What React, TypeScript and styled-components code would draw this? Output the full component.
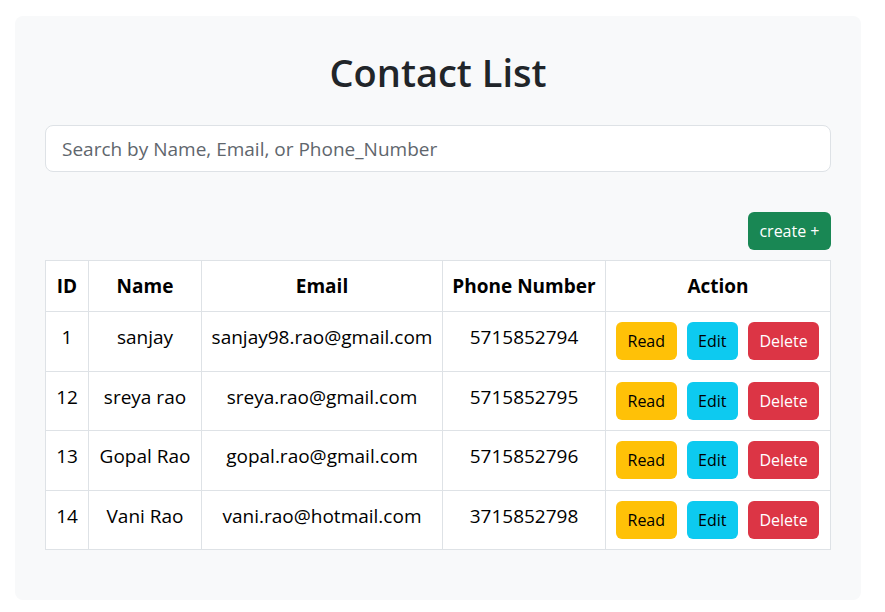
import React from "react";
import styled, { createGlobalStyle } from "styled-components";

const GlobalStyle = createGlobalStyle`
  body {
    margin: 0;
    background: #fff;
    font-family: "Open Sans", "Noto Sans", sans-serif;
    color: #212529;
  }
`;

const Page = styled.div`
  padding: 16px 0 0 15px;
`;

const Card = styled.div`
  width: 846px;
  box-sizing: border-box;
  background: #f8f9fa;
  border-radius: 8px;
  padding: 32px 30px 50px;
`;

const Title = styled.h1`
  margin: 0 0 29px;
  text-align: center;
  font-size: 38px;
  font-weight: 600;
  line-height: 48px;
  color: #212529;
`;

const Search = styled.input`
  display: block;
  width: 100%;
  box-sizing: border-box;
  height: 47px;
  padding: 0 16px;
  font-family: inherit;
  font-size: 19px;
  border: 1px solid #dee2e6;
  border-radius: 8px;
  background: #fff;
  color: #212529;
  outline: none;
  &::placeholder {
    color: #5f666d;
  }
`;

const Toolbar = styled.div`
  display: flex;
  justify-content: flex-end;
  margin: 40px 0 10px;
`;

const Button = styled.button<{ $bg: string; $fg: string }>`
  height: 38px;
  padding: 0 11.5px;
  border: none;
  border-radius: 6px;
  background: ${(p) => p.$bg};
  color: ${(p) => p.$fg};
  font-family: inherit;
  font-size: 16px;
  line-height: 38px;
  white-space: nowrap;
  cursor: pointer;
`;

const Table = styled.table`
  width: 100%;
  border-collapse: collapse;
  background: #fff;
  table-layout: fixed;
  th,
  td {
    border: 1px solid #dee2e6;
    text-align: center;
    vertical-align: top;
    padding: 10px 6px;
    font-size: 19px;
    line-height: 30px;
    color: #000;
    white-space: nowrap;
  }
  td {
    padding: 10px 6px 10.5px;
  }
  td.actions {
    padding-left: 10px;
    padding-right: 6px;
  }
  th {
    font-weight: 700;
  }
`;

const Actions = styled.div`
  display: flex;
  gap: 10px;
`;

const contacts = [
  { id: 1, name: "sanjay", email: "sanjay98.rao@gmail.com", phone: "5715852794" },
  { id: 12, name: "sreya rao", email: "sreya.rao@gmail.com", phone: "5715852795" },
  { id: 13, name: "Gopal Rao", email: "gopal.rao@gmail.com", phone: "5715852796" },
  { id: 14, name: "Vani Rao", email: "vani.rao@hotmail.com", phone: "3715852798" },
];

export default function App() {
  return (
    <Page>
      <GlobalStyle />
      <Card>
        <Title>Contact List</Title>
        <Search placeholder="Search by Name, Email, or Phone_Number" />
        <Toolbar>
          <Button $bg="#198754" $fg="#fff">create +</Button>
        </Toolbar>
        <Table>
          <colgroup>
            <col style={{ width: 43 }} />
            <col style={{ width: 113 }} />
            <col style={{ width: 241 }} />
            <col style={{ width: 163 }} />
            <col />
          </colgroup>
          <thead>
            <tr>
              <th>ID</th>
              <th>Name</th>
              <th>Email</th>
              <th>Phone Number</th>
              <th>Action</th>
            </tr>
          </thead>
          <tbody>
            {contacts.map((c) => (
              <tr key={c.id}>
                <td>{c.id}</td>
                <td>{c.name}</td>
                <td>{c.email}</td>
                <td>{c.phone}</td>
                <td className="actions">
                  <Actions>
                    <Button $bg="#ffc107" $fg="#000">Read</Button>
                    <Button $bg="#0dcaf0" $fg="#000">Edit</Button>
                    <Button $bg="#dc3545" $fg="#fff">Delete</Button>
                  </Actions>
                </td>
              </tr>
            ))}
          </tbody>
        </Table>
      </Card>
    </Page>
  );
}
